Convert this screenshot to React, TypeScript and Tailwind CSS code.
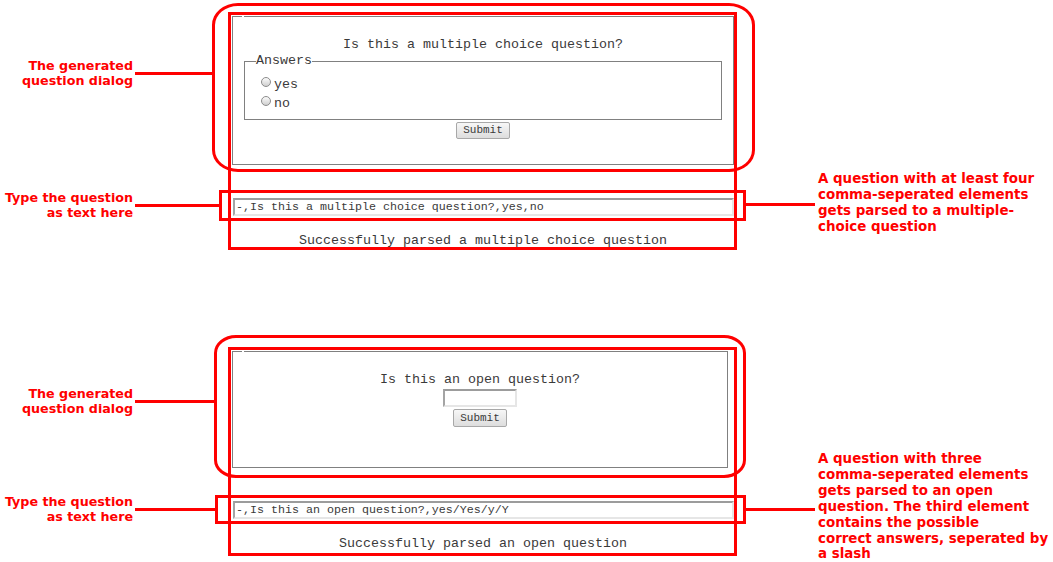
import React from "react";

const mono = "font-['Liberation_Mono','Courier_New',monospace]";
const note = "font-['DejaVu_Sans','Verdana',sans-serif] font-bold text-[#ff0000]";
const ink = "text-[#3a3a3a]";

// ── Small form bits ─────────────────────────────────────────────────────────
function Radio({ label }: { label: string }) {
  return (
    <div className="flex h-[19px] items-start">
      <span className="ml-[5px] mt-[2px] h-[10px] w-[10px] rounded-full border border-[#8c8c8c] bg-linear-to-b from-[#fbfbfb] to-[#cfcfcf]" />
      <span className={`ml-[3px] ${mono} text-[13.33px] leading-[19px] ${ink}`}>
        {label}
      </span>
    </div>
  );
}

function SubmitButton({ tall = false }: { tall?: boolean }) {
  return (
    <button
      className={`mt-[2px] ${tall ? "h-[18px]" : "h-[17px]"} w-[54px] rounded-[2px] border border-[#a8a8a8] bg-linear-to-b from-[#f7f7f7] to-[#dddddd] ${mono} text-[11px] leading-none ${ink}`}
    >
      Submit
    </button>
  );
}

function QuestionInput({ value }: { value: string }) {
  return (
    <input
      readOnly
      defaultValue={value}
      className={`ml-px mt-[33px] block h-[18px] w-[501px] border-2 border-t-[#9c9c9c] border-l-[#a4a4a4] border-r-[#e6e6e6] border-b-[#e6e6e6] bg-white pl-px ${mono} text-[11.67px] leading-none ${ink} outline-none`}
    />
  );
}

function Status({ children }: { children: React.ReactNode }) {
  return (
    <p className={`mt-[17px] text-center ${mono} text-[13.33px] leading-[16px] ${ink}`}>
      {children}
    </p>
  );
}

// ── Annotation pieces ───────────────────────────────────────────────────────
function Label({ lines }: { lines: string[] }) {
  return (
    <div className={`w-[133px] shrink-0 text-right text-[12.7px] leading-[15px] whitespace-nowrap ${note}`}>
      {lines.map((l) => (
        <div key={l}>{l}</div>
      ))}
    </div>
  );
}

function Note({ lines }: { lines: string[] }) {
  return (
    <div className={`ml-[3px] text-[13.4px] leading-[15.9px] whitespace-nowrap ${note}`}>
      {lines.map((l) => (
        <div key={l}>{l}</div>
      ))}
    </div>
  );
}

export default function App() {
  return (
    <div className="h-[562px] w-[1053px] overflow-hidden bg-white">
      {/* ── Multiple choice example ── */}
      <section className="relative flex items-start">
        <div className="flex w-[228px] shrink-0 flex-col gap-[102px] pt-[58px]">
          <div className="flex items-center">
            <Label lines={["The generated", "question dialog"]} />
            <div className="ml-[2px] h-[3px] w-[77px] bg-[#ff0000]" />
          </div>
          <div className="flex items-center">
            <Label lines={["Type the question", "as text here"]} />
            <div className="ml-[2px] h-[3px] w-[84px] bg-[#ff0000]" />
          </div>
        </div>

        <div className="mt-[12px] h-[238px] w-[509px] shrink-0 border-[3px] border-[#ff0000] pl-px pt-px">
          <div className="relative flex h-[149px] w-[502px] flex-col items-center border border-[#808080] pt-[20px]">
            <span className="absolute -top-px left-[9px] h-px w-[2px] bg-white" />
            <p className={`${mono} text-[13.33px] leading-[16px] ${ink}`}>
              Is this a multiple choice question?
            </p>
            <fieldset className="mx-[11px] self-stretch border border-[#808080] px-[11px] pb-[6px]">
              <legend className={`${mono} text-[13.33px] leading-[16px] ${ink}`}>Answers</legend>
              <div className="pt-[6px]">
                <Radio label="yes" />
                <Radio label="no" />
              </div>
            </fieldset>
            <SubmitButton />
          </div>
          <QuestionInput value="-,Is this a multiple choice question?,yes,no" />
          <Status>Successfully parsed a multiple choice question</Status>
        </div>

        <div className="flex items-start pl-[8px] pt-[171px]">
          <div className="mt-[32px] h-[3px] w-[70px] shrink-0 bg-[#ff0000]" />
          <Note
            lines={[
              "A question with at least four",
              "comma-seperated elements",
              "gets parsed to a multiple-",
              "choice question",
            ]}
          />
        </div>

        {/* highlight marks drawn over the page */}
        <div className="pointer-events-none absolute left-[212px] top-[3px] h-[169px] w-[543px] rounded-[26px/22px] border-[3px] border-[#ff0000]" />
        <div className="pointer-events-none absolute left-[219px] top-[190px] h-[31px] w-[527px] border-[3px] border-[#ff0000]" />
      </section>

      {/* ── Open question example ── */}
      <section className="relative flex items-start">
        <div className="flex w-[228px] shrink-0 flex-col gap-[78px] pt-[136px]">
          <div className="flex items-center">
            <Label lines={["The generated", "question dialog"]} />
            <div className="ml-[2px] h-[3px] w-[79px] bg-[#ff0000]" />
          </div>
          <div className="flex items-center">
            <Label lines={["Type the question", "as text here"]} />
            <div className="ml-[2px] h-[3px] w-[80px] bg-[#ff0000]" />
          </div>
        </div>

        <div className="mt-[97px] h-[209px] w-[509px] shrink-0 border-[3px] border-[#ff0000] pl-px pt-px">
          <div className="relative flex h-[117px] w-[496px] flex-col items-center border border-[#808080] pt-[20px]">
            <span className="absolute -top-px left-[9px] h-px w-[2px] bg-white" />
            <p className={`${mono} text-[13.33px] leading-[16px] ${ink}`}>Is this an open question?</p>
            <input
              readOnly
              className="mt-px h-[18px] w-[74px] border-2 border-t-[#9c9c9c] border-l-[#a4a4a4] border-r-[#e6e6e6] border-b-[#e6e6e6] bg-white outline-none"
            />
            <SubmitButton tall />
          </div>
          <QuestionInput value="-,Is this an open question?,yes/Yes/y/Y" />
          <Status>Successfully parsed an open question</Status>
        </div>

        <div className="flex items-start pl-[8px] pt-[201px]">
          <div className="mt-[57px] h-[3px] w-[70px] shrink-0 bg-[#ff0000]" />
          <Note
            lines={[
              "A question with three",
              "comma-seperated elements",
              "gets parsed to an open",
              "question. The third element",
              "contains the possible",
              "correct answers, seperated by",
              "a slash",
            ]}
          />
        </div>

        <div className="pointer-events-none absolute left-[214px] top-[85px] h-[143px] w-[532px] rounded-[22px/18px] border-[3px] border-[#ff0000]" />
        <div className="pointer-events-none absolute left-[215px] top-[245px] h-[29px] w-[531px] border-[3px] border-[#ff0000]" />
      </section>
    </div>
  );
}
